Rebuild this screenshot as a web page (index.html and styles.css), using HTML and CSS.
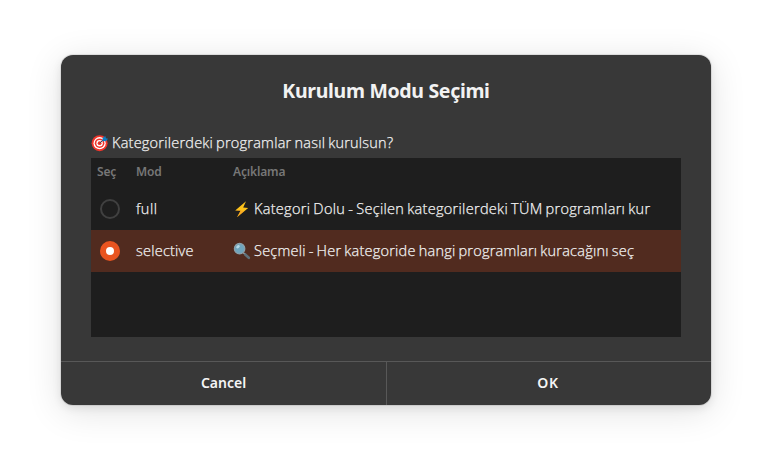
FILE: index.html
```html
<!DOCTYPE html>
<html lang="tr">
<head>
<meta charset="utf-8">
<title>Kurulum Modu Seçimi</title>
<link rel="stylesheet" href="styles.css">
</head>
<body>
<main class="dialog">
  <h1 class="title"><span>Kurulum Modu Seçimi</span></h1>
  <section class="content">
    <p class="question">
      <svg class="emoji" viewBox="0 0 18 18"><circle cx="8.6" cy="9.2" r="8" fill="#f0352b"/><circle cx="8.6" cy="9.2" r="6.1" fill="#fff"/><circle cx="8.6" cy="9.2" r="4.8" fill="#f0352b"/><circle cx="8.6" cy="9.2" r="3.2" fill="#fff"/><circle cx="8.6" cy="9.2" r="1.9" fill="#f0352b"/><path d="M8.6 9.2 13 5.3" stroke="#324e60" stroke-width="1"/><path d="m11.4 6.9.3-3.1L14.4 2l.4 2.2 2.4.6-2.4 2.4z" fill="#087cc4"/></svg>
      <span class="q-text">Kategorilerdeki programlar nasıl kurulsun?</span>
    </p>
    <div class="list">
      <div class="row head"><span class="h1c">Seç</span><span class="h2c">Mod</span><span class="h3c">Açıklama</span></div>
      <div class="row">
        <i class="radio"></i><span class="full">full</span>
        <div class="desc">
          <svg class="emoji" viewBox="0 0 18 18"><path d="M13 1.2 2.2 10.4l5.3.4L4 17.2 15.2 8l-5-.5z" fill="#fcc21b"/><path d="m2.2 10.4 5.3.4L4 17.2l7.2-6-5.4-1.4z" fill="#f79329" opacity=".5"/></svg>
          <span class="d1">Kategori Dolu - Seçilen kategorilerdeki TÜM programları kur</span>
        </div>
      </div>
      <div class="row selected">
        <i class="radio on"></i><span class="selective">selective</span>
        <div class="desc">
          <svg class="emoji" viewBox="0 0 18 18"><path d="m10.5 11 1.6 1.2" stroke="#b0bec5" stroke-width="1.5"/><path d="m12.2 12.5 3.6 3.3" stroke="#5f7079" stroke-width="2.6" stroke-linecap="round"/><circle cx="6.6" cy="6.7" r="5.2" fill="#6fa5bd" stroke="#8ba0aa" stroke-width="1.3"/><ellipse cx="5" cy="4.7" rx="2" ry="1.4" transform="rotate(-40 5 4.7)" fill="#b5d9e7"/></svg>
          <span class="d2">Seçmeli - Her kategoride hangi programları kuracağını seç</span>
        </div>
      </div>
    </div>
  </section>
  <footer class="actions">
    <button class="cancel"><span>Cancel</span></button>
    <button class="ok"><span>OK</span></button>
  </footer>
</main>
</body>
</html>
```
FILE: styles.css
```css
* { box-sizing: border-box; }
body {
  margin: 0;
  padding: 55px 61px;
  background: #fff;
  color: #f2f2f2;
  font: 300 14.5px/20px "Open Sans", "Noto Sans", sans-serif;
  overflow: hidden;
}
.dialog {
  display: flex;
  flex-direction: column;
  width: 650px;
  height: 350px;
  overflow: hidden;
  background: #383838;
  border-radius: 12px;
  box-shadow: 0 0 0 1px rgba(0,0,0,.08), 0 3px 10px rgba(0,0,0,.09), 0 6px 36px rgba(0,0,0,.12);
}
.title {
  margin: 0;
  padding-top: 22px;
  height: 77px;
  text-align: center;
  font: 700 19.5px/28px "Noto Sans", sans-serif;
  letter-spacing: -.32px;
}
span { white-space: nowrap; }
.q-text, .full, .selective, .d1, .d2 {
  -webkit-text-stroke: .25px currentColor;
  word-spacing: -1px;
  letter-spacing: .23px;
}
.content { flex: 1; padding: 0 30px; }
.question { display: flex; gap: 3px; margin: 0; height: 26px; padding-top: 1px; }
.emoji { width: 18px; height: 18px; flex: none; margin-top: 1px; }
.list { height: 179px; background: #1e1e1e; }
.row {
  display: grid;
  grid-template-columns: 45px 97px 1fr;
  align-items: center;
  height: 42px;
}
.head {
  height: 30px;
  padding-bottom: 3px;
  color: #777;
  font: 600 12px/20px "Noto Sans", sans-serif;
  letter-spacing: -.15px;
}
.head .h1c { padding-left: 6px; }
.full { letter-spacing: .5px; }
.d1 { letter-spacing: .3px; }
.selected { background: #512b1f; }
.radio {
  width: 20px;
  height: 20px;
  margin-left: 9px;
  border: 2px solid #404040;
  border-radius: 50%;
}
.radio.on { border: 6px solid #e95420; background: #fff; }
.desc { display: flex; gap: 3px; }
.actions {
  display: grid;
  grid-template-columns: 326px 1fr;
  height: 44px;
  border-top: 1px solid #585858;
}
button {
  padding: 0 0 2px;
  border: 0;
  background: none;
  color: #f5f5f5;
  font: 600 14px/20px "Noto Sans", sans-serif;
}
.cancel { border-right: 1px solid #585858; }
.ok { padding-right: 2px; letter-spacing: .6px; }
```
